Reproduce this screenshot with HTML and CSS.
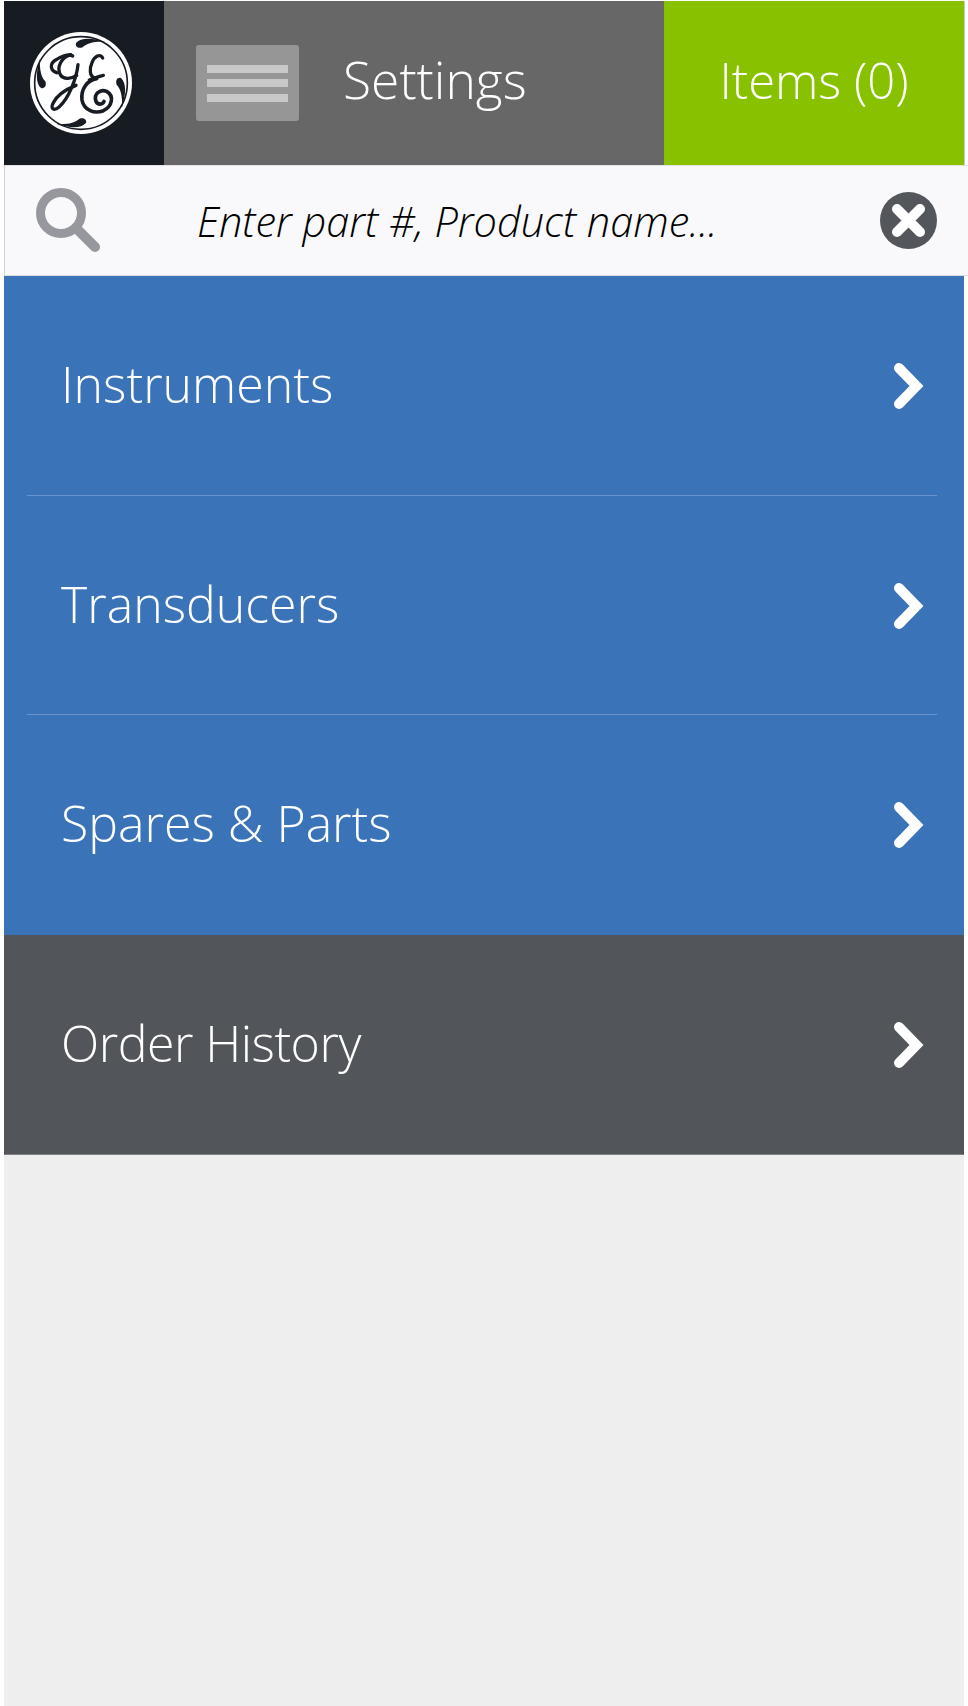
FILE: index.html
```html
<!DOCTYPE html>
<html lang="en">
<head>
<meta charset="utf-8">
<title>Settings</title>
<link rel="stylesheet" href="styles.css">
</head>
<body>
<div class="app">
  <header class="topbar">
    <div class="logo-cell">
      <svg class="logo" viewBox="12 12 306 306" aria-label="GE logo">
        <circle cx="165" cy="165" r="153" fill="#fff"/>
        <circle cx="165" cy="165" r="139" fill="none" stroke="#171c23" stroke-width="5"/>
        <g fill="none" stroke="#171c23" stroke-linecap="round" stroke-linejoin="round" stroke-width="10">
          <path d="M92 134C74 128 70 110 86 98C102 86 128 76 140 84"/>
          <path d="M134 80C106 88 90 118 104 142C114 156 136 152 152 142"/>
          <path d="M156 110C152 150 128 212 100 236C84 250 72 244 82 224C92 204 120 184 150 172"/>
          <path d="M230 90C222 76 206 84 198 104C190 122 190 144 206 150"/>
          <path d="M190 156C202 152 214 146 232 142"/>
          <path stroke-width="11" d="M212 152C184 157 164 182 168 216C174 248 206 258 232 248C258 236 266 204 242 190C222 182 202 198 210 220C216 232 230 230 234 220"/>
        </g>
        <g fill="#171c23">
          <path d="M150 45C165 28 200 30 238 42C205 40 182 46 170 58C156 63 147 55 150 45Z"/>
          <path transform="rotate(90 165 165)" d="M150 45C165 28 200 30 238 42C205 40 182 46 170 58C156 63 147 55 150 45Z"/>
          <path transform="rotate(180 165 165)" d="M150 45C165 28 200 30 238 42C205 40 182 46 170 58C156 63 147 55 150 45Z"/>
          <path transform="rotate(270 165 165)" d="M150 45C165 28 200 30 238 42C205 40 182 46 170 58C156 63 147 55 150 45Z"/>
        </g>
      </svg>
    </div>
    <div class="settings-cell">
      <button class="menu-btn" type="button" aria-label="Menu">
        <span class="menu-line"></span>
        <span class="menu-line"></span>
        <span class="menu-line"></span>
      </button>
      <span class="settings-label">Settings</span>
    </div>
    <div class="items-cell">Items (0)</div>
  </header>

  <div class="search">
    <svg class="search-icon" viewBox="0 0 66 66" aria-hidden="true">
      <circle cx="25" cy="25" r="20.5" fill="none" stroke="#96989d" stroke-width="9"/>
      <path d="M41 41 59 59" fill="none" stroke="#96989d" stroke-width="10" stroke-linecap="round"/>
    </svg>
    <span class="search-text">Enter part #, Product name...</span>
    <svg class="clear-icon" viewBox="0 0 57 57" aria-hidden="true">
      <circle cx="28.5" cy="28.5" r="28.5" fill="#53565b"/>
      <path d="M17 17 40 40M40 17 17 40" fill="none" stroke="#fff" stroke-width="10" stroke-linecap="round"/>
    </svg>
  </div>

  <nav class="menu">
    <a class="row row-blue"><span>Instruments</span><svg class="chev" viewBox="0 0 32 48"><path d="M7 6 24.5 24 7 42" fill="none" stroke="#fff" stroke-width="10" stroke-linecap="round"/></svg></a>
    <a class="row row-blue"><span>Transducers</span><svg class="chev" viewBox="0 0 32 48"><path d="M7 6 24.5 24 7 42" fill="none" stroke="#fff" stroke-width="10" stroke-linecap="round"/></svg></a>
    <a class="row row-blue row-last"><span>Spares &amp; Parts</span><svg class="chev" viewBox="0 0 32 48"><path d="M7 6 24.5 24 7 42" fill="none" stroke="#fff" stroke-width="10" stroke-linecap="round"/></svg></a>
    <a class="row row-dark"><span>Order History</span><svg class="chev" viewBox="0 0 32 48"><path d="M7 6 24.5 24 7 42" fill="none" stroke="#fff" stroke-width="10" stroke-linecap="round"/></svg></a>
  </nav>
  <div class="rest"></div>
</div>
</body>
</html>
```
FILE: styles.css
```css
* { box-sizing: border-box; }
html, body { margin: 0; height: 100%; background: #fff; }
body { padding: 1px 0 0 4px; font-family: "Open Sans", "Lato", sans-serif; font-weight: 300; color: #fff; }
.app { width: 964px; height: 1705px; display: flex; flex-direction: column; }
.topbar { display: flex; width: 961px; height: 164px; flex: none; border-right: 1px solid #c9c9c9; }
.logo-cell { width: 160px; background: #171c23; display: flex; align-items: center; justify-content: center; }
.logo { width: 102px; height: 102px; display: block; margin-right: 6px; }
.settings-cell { width: 500px; background: #676767; display: flex; align-items: center; padding-left: 32px; }
.menu-btn { width: 103px; height: 76px; margin: 0; padding: 0; border: 0; border-radius: 3px; background: #969696; display: flex; flex-direction: column; align-items: center; justify-content: center; gap: 6.5px; }
.menu-line { width: 81px; height: 8px; background: #c8c8c8; display: block; }
.settings-label { margin-left: 44px; font-size: 51.5px; line-height: 1; position: relative; top: -3px; }
.items-cell { width: 300px; background: #88c100; display: flex; align-items: center; justify-content: center; font-size: 49px; padding-bottom: 6px; }
.search { height: 111px; flex: none; background: #f9f9fb; display: flex; align-items: center; padding: 0 31px 0 32px; border-bottom: 1px solid #dcdee3; border-top: 1px solid #e4e4e6; border-left: 1px solid #d2d2d4; }
.search-icon { width: 66px; height: 66px; flex: none; margin-left: -1px; }
.search-text { margin-left: 95px; font-size: 41.5px; font-style: italic; color: #000; flex: 1; font-weight: 300; }
.clear-icon { width: 57px; height: 57px; flex: none; }
.menu { flex: none; width: 960px; display: flex; flex-direction: column; }
.row { position: relative; height: 219px; flex: none; display: flex; align-items: center; justify-content: space-between; padding: 0 40px 0 57px; font-size: 50px; }
.row > span { position: relative; top: -2px; }
.row:first-child { height: 220px; }
.row-blue { background: #3b73b8; }
.row-blue::after { content: ""; position: absolute; left: 23px; right: 27px; bottom: 0; height: 1px; background: #6b94cc; }
.row-last { height: 220px; }
.row-last::after { display: none; }
.row-dark { height: 220px; background: #52555a; border-bottom: 1px solid #7d7f83; }
.row-dark > span { letter-spacing: -0.5px; }
.chev { width: 32px; height: 48px; flex: none; }
.rest { flex: 1; width: 960px; background: #eeeeee; }
```
